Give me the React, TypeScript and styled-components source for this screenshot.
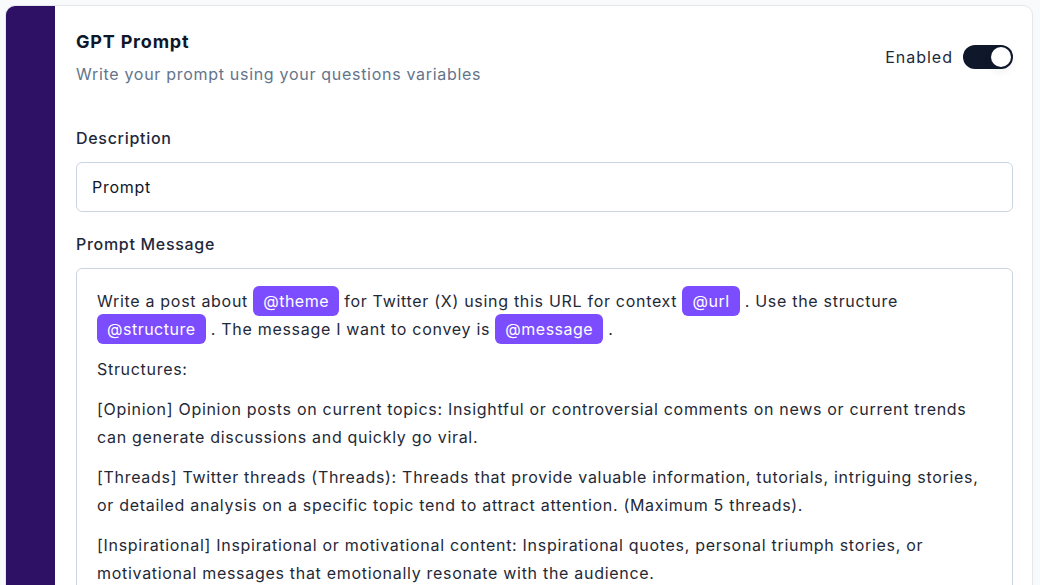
import React from 'react';
import styled, { createGlobalStyle } from 'styled-components';

const GlobalStyle = createGlobalStyle`
  body {
    margin: 0;
    background: #f8fafc;
    font-family: Inter, "Noto Sans", sans-serif;
    color: #1f2937;
    letter-spacing: 0.7px;
    overflow: hidden;
  }
`;

type Part = { text: string; chip?: boolean };

const intro: Part[] = [
  { text: 'Write a post about ' },
  { text: '@theme', chip: true },
  { text: ' for Twitter (X) using this URL for context ' },
  { text: '@url', chip: true },
  { text: ' . Use the structure ' },
  { text: '@structure', chip: true },
  { text: ' . The message I want to convey is ' },
  { text: '@message', chip: true },
  { text: ' .' },
];

const structures = [
  'Structures:',
  '[Opinion] Opinion posts on current topics: Insightful or controversial comments on news or current trends can generate discussions and quickly go viral.',
  '[Threads] Twitter threads (Threads): Threads that provide valuable information, tutorials, intriguing stories, or detailed analysis on a specific topic tend to attract attention. (Maximum 5 threads).',
  '[Inspirational] Inspirational or motivational content: Inspirational quotes, personal triumph stories, or motivational messages that emotionally resonate with the audience.',
];

const App = () => {
  return (
    <>
      <GlobalStyle />
      <Card>
        <SideBar />
        <Body>
          <Header>
            <div>
              <Title>GPT Prompt</Title>
              <Subtitle>Write your prompt using your questions variables</Subtitle>
            </div>
            <ToggleWrap>
              <span>Enabled</span>
              <Track>
                <Knob />
              </Track>
            </ToggleWrap>
          </Header>

          <Field>
            <Label>Description</Label>
            <Input>Prompt</Input>
          </Field>

          <Field $gap={20}>
            <Label>Prompt Message</Label>
            <Editor>
              <Para>
                {intro.map((p, i) =>
                  p.chip ? <Chip key={i}>{p.text}</Chip> : <span key={i}>{p.text}</span>
                )}
              </Para>
              {structures.map((s) => (
                <Para key={s}>{s}</Para>
              ))}
            </Editor>
          </Field>
        </Body>
      </Card>
    </>
  );
};

export default App;

/* Styles */

const Card = styled.div`
  display: flex;
  margin: 5px 7px 0 5px;
  background: #fff;
  border: 1px solid #e5e7eb;
  border-radius: 10px;
  overflow: hidden;
  min-height: 700px;
`;

const SideBar = styled.div`
  width: 49px;
  flex-shrink: 0;
  background: #2e1065;
`;

const Body = styled.div`
  flex: 1;
  padding: 22px 19px 0 21px;
`;

const Header = styled.div`
  display: flex;
  align-items: center;
  justify-content: space-between;
  margin-bottom: 40px;
`;

const Title = styled.div`
  font-size: 18px;
  line-height: 28px;
  font-weight: 700;
  letter-spacing: 0.8px;
  color: #0f172a;
`;

const Subtitle = styled.div`
  margin-top: 6px;
  font-size: 16px;
  line-height: 24px;
  color: #64748b;
`;

const ToggleWrap = styled.div`
  display: flex;
  align-items: center;
  gap: 10px;
  font-size: 16px;
  letter-spacing: 1px;
  color: #1e293b;
`;

const Track = styled.div`
  position: relative;
  width: 50px;
  height: 24px;
  border-radius: 12px;
  background: #0f172a;
`;

const Knob = styled.div`
  position: absolute;
  top: 2px;
  right: 2px;
  width: 20px;
  height: 20px;
  border-radius: 50%;
  background: #fff;
  box-shadow: 0 4px 10px rgba(15, 23, 42, 0.08);
`;

const Field = styled.div<{ $gap?: number }>`
  margin-top: ${(p) => (p.$gap ? `${p.$gap}px` : '0')};
  display: flex;
  flex-direction: column;
  gap: 12px;
`;

const Label = styled.div`
  font-size: 16px;
  line-height: 24px;
  font-weight: 500;
  color: #1e293b;
`;

const Input = styled.div`
  box-sizing: border-box;
  height: 50px;
  display: flex;
  align-items: center;
  padding: 0 15px;
  border: 1px solid #cbd5e1;
  border-radius: 6px;
  font-size: 16px;
  color: #0f172a;
`;

const Editor = styled.div`
  min-height: 400px;
  padding: 18px 20px;
  border: 1px solid #cbd5e1;
  border-radius: 6px;
  font-size: 16px;
  line-height: 28px;
  color: #1f2937;
`;

const Para = styled.p`
  margin: 0 0 12px;
`;

const Chip = styled.span`
  display: inline;
  padding: 5px 10px;
  border-radius: 6px;
  background: #7c4dff;
  color: #fff;
  letter-spacing: 0.5px;
  box-decoration-break: clone;
`;
